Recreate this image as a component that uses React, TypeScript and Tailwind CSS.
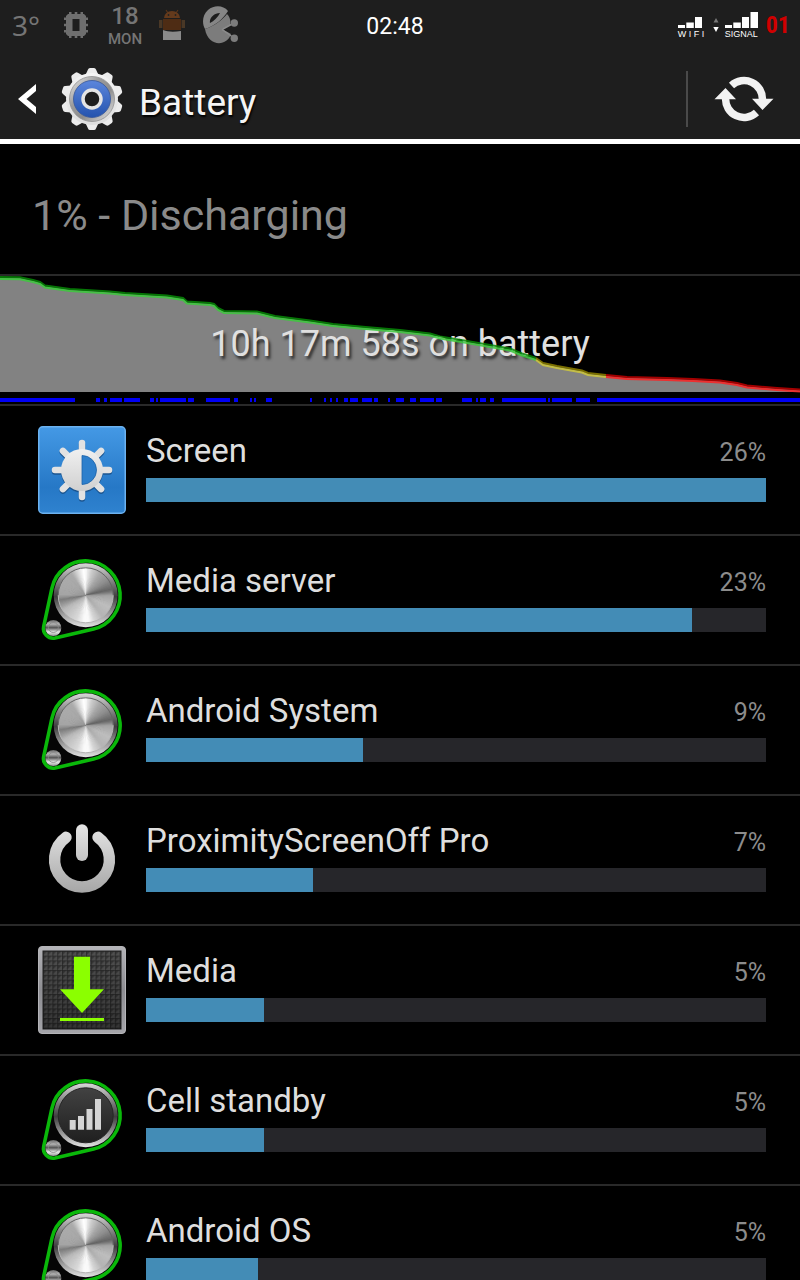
import type { ReactNode } from 'react'

type Usage = { name: string; percent: string; fill: number; icon: ReactNode }

// screen-on periods, as [start, end] along the time axis
const awake = [
  [0, 75], [96, 100], [104, 107], [110, 122], [124, 140], [150, 154], [156, 158], [160, 186],
  [188, 194], [206, 230], [234, 238], [250, 252], [254, 256], [266, 272], [310, 312], [324, 326],
  [330, 332], [336, 338], [344, 348], [350, 358], [362, 372], [374, 378], [388, 390], [396, 404],
  [410, 416], [420, 434], [436, 442], [462, 472], [476, 478], [480, 486], [490, 494], [502, 546],
  [548, 550], [552, 572], [576, 590], [597, 800],
]

const high =
  '0,2 20,2.3 33,5 40,7 45,10.5 70,14 110,16.5 125,18 167,20.5 183,23 187,26.5 210,28 214,29 218,33 224,36 257,36.5 275,41 310,45.5 333,49 360,51.5 400,55 430,58.5 440,61.5 467,66 490,70 510,73.5 522,78.5 536,83'
const medium = '536,83 543,88 557,91 582,95.5 588,98 606,100'
const low = '606,100 627,102 667,103 693,104 720,105.5 737,108 747,110.5 777,113 800,114.5'

const levels = [
  { points: high, dark: '#078a07', light: '#3ccb3c' },
  { points: medium, dark: '#8f8200', light: '#cfc83c' },
  { points: low, dark: '#c00000', light: '#ff2222' },
]

// brightness of the brushed metal at given angles, clockwise from the top
const shine = [
  [0, 240], [12, 205], [30, 170], [55, 140], [76, 100], [90, 165], [115, 190], [140, 180],
  [160, 215], [172, 250], [182, 250], [200, 215], [235, 185], [258, 125], [270, 165], [300, 170],
  [325, 170], [343, 225], [354, 255], [360, 240],
]

function shineAt(angle: number) {
  const i = shine.findIndex(([a]) => a > angle)
  const [a0, v0] = shine[i - 1]
  const [a1, v1] = shine[i]
  return Math.round(v0 + ((v1 - v0) * (angle - a0)) / (a1 - a0))
}

function BrushedDisc({ cx, cy, r }: { cx: number; cy: number; r: number }) {
  const at = (deg: number) => {
    const rad = (deg * Math.PI) / 180
    return `${cx + r * Math.sin(rad)} ${cy - r * Math.cos(rad)}`
  }
  return (
    <g>
      {Array.from({ length: 120 }, (_, i) => {
        const v = shineAt(i * 3)
        return (
          <path
            key={i}
            d={`M${cx} ${cy}L${at(i * 3)}A${r} ${r} 0 0 1 ${at(i * 3 + 5)}Z`}
            fill={`rgb(${v},${v},${v})`}
          />
        )
      })}
    </g>
  )
}

function BeltIcon({ id, signal = false }: { id: string; signal?: boolean }) {
  return (
    <svg viewBox="0 0 88 88" className="size-full" aria-hidden="true">
      <defs>
        <linearGradient id={`${id}-ring`} x1="0" y1="0" x2="0" y2="1">
          <stop offset="0" stopColor="#d8d8d8" />
          <stop offset="0.25" stopColor="#8c8c8c" />
          <stop offset="0.52" stopColor="#3e3e3e" />
          <stop offset="0.75" stopColor="#8e8e8e" />
          <stop offset="1" stopColor="#e4e4e4" />
        </linearGradient>
        <linearGradient id={`${id}-face`} x1="0" y1="0" x2="0" y2="1">
          <stop offset="0" stopColor="#424242" />
          <stop offset="1" stopColor="#1f1f1f" />
        </linearGradient>
        <linearGradient id={`${id}-knob`} x1="0" y1="0" x2="0" y2="1">
          <stop offset="0" stopColor="#666" />
          <stop offset="0.25" stopColor="#b5b5b5" />
          <stop offset="0.48" stopColor="#555" />
          <stop offset="0.75" stopColor="#e8e8e8" />
          <stop offset="1" stopColor="#999" />
        </linearGradient>
      </defs>
      <path
        d="M14 31.8A34.5 34.5 0 1 1 55.6 73L17.2 82A9.8 9.8 0 0 1 5.7 70.3Z"
        fill="#050505"
        stroke="#0ab80a"
        strokeWidth="3.6"
      />
      <circle cx="47.7" cy="39.3" r="32" fill={`url(#${id}-ring)`} />
      {signal ? (
        <>
          <circle cx="47.7" cy="39.3" r="27.5" fill={`url(#${id}-face)`} stroke="#252525" />
          <path d="M31.7 44h6v9.7h-6zM40 40h6v13.7h-6zM48.5 33h6v20.7h-6zM57 23h6v30.7h-6z" fill="#d4d4d4" />
        </>
      ) : (
        <>
          <BrushedDisc cx={47.7} cy={39.3} r={27.5} />
          <path d="M20.2 39.3a27.5 27.5 0 0 1 55 0" fill="none" stroke="#666" />
          <path d="M20.2 39.3a27.5 27.5 0 0 0 55 0" fill="none" stroke="#b5b5b5" />
        </>
      )}
      <circle cx="15.3" cy="72" r="8" fill={`url(#${id}-knob)`} />
      <circle cx="15.3" cy="71.5" r="5" fill="none" stroke="#8a8a8a" strokeWidth="0.8" />
    </svg>
  )
}

function ScreenIcon() {
  return (
    <svg viewBox="0 0 88 88" className="size-full" aria-hidden="true">
      <defs>
        <linearGradient id="screen-bg" x1="0" y1="0" x2="0" y2="1">
          <stop offset="0" stopColor="#4499e5" />
          <stop offset="0.7" stopColor="#2678c6" />
          <stop offset="1" stopColor="#2f82cf" />
        </linearGradient>
        <linearGradient id="screen-sun" x1="0" y1="0" x2="0" y2="1">
          <stop offset="0" stopColor="#f0f0f0" />
          <stop offset="1" stopColor="#d0d0d0" />
        </linearGradient>
      </defs>
      <rect x="0.75" y="0.75" width="86.5" height="86.5" rx="4" fill="url(#screen-bg)" stroke="#6cb2f0" strokeWidth="1.5" />
      {['#1b5590', '#e2e2e2'].map((color, layer) => (
        <g key={color} transform={layer === 0 ? 'translate(0 1.5)' : undefined}>
          {[0, 45, 90, 135, 180, 225, 270, 315].map((angle) => (
            <path
              key={angle}
              d="M44 26V17"
              stroke={color}
              strokeWidth="6.5"
              strokeLinecap="round"
              transform={`rotate(${angle} 44 44)`}
            />
          ))}
          <circle cx="44" cy="44" r="21" fill={layer === 0 ? color : 'url(#screen-sun)'} />
        </g>
      ))}
      <path d="M44 29.5a14.5 14.5 0 0 1 0 29z" fill="#2d7fcc" stroke="#1c62a8" strokeWidth="0.8" />
    </svg>
  )
}

function PowerIcon() {
  return (
    <svg viewBox="0 0 88 88" className="size-full" fill="none" strokeLinecap="round" aria-hidden="true">
      <defs>
        <linearGradient id="power" gradientUnits="userSpaceOnUse" x1="0" y1="8" x2="0" y2="77">
          <stop offset="0" stopColor="#e6e6e6" />
          <stop offset="1" stopColor="#a6a6a6" />
        </linearGradient>
      </defs>
      <path d="M28 21.3A27.4 27.4 0 1 0 60 21.3" stroke="url(#power)" strokeWidth="11.4" />
      <rect x="38" y="8.3" width="12" height="36.7" rx="6" fill="url(#power)" />
    </svg>
  )
}

function DownloadIcon() {
  return (
    <svg viewBox="0 0 88 88" className="size-full" aria-hidden="true">
      <defs>
        <linearGradient id="frame" x1="0" y1="0" x2="0" y2="1">
          <stop offset="0" stopColor="#b4b4b8" />
          <stop offset="0.5" stopColor="#8d8d92" />
          <stop offset="1" stopColor="#a5a5aa" />
        </linearGradient>
        <pattern id="studs" width="4.8" height="4.8" patternUnits="userSpaceOnUse">
          <rect width="4.8" height="4.8" fill="#353535" />
          <path d="M0 4.8L4.8 0V4.8Z" fill="#505050" />
          <path d="M0 0H4.8M0 0V4.8" stroke="#242424" />
        </pattern>
        <linearGradient id="shade" x1="0" y1="0" x2="0" y2="1">
          <stop offset="0" stopColor="#000" stopOpacity="0" />
          <stop offset="1" stopColor="#000" stopOpacity="0.35" />
        </linearGradient>
      </defs>
      <rect x="0.5" y="0.5" width="87" height="87" rx="3.5" fill="url(#frame)" stroke="#b4b4b8" />
      <rect x="5" y="5" width="78" height="78" fill="url(#studs)" stroke="#222" />
      <rect x="5" y="5" width="78" height="78" fill="url(#shade)" />
      <path d="M36 10.7h16v32.6h14L44 67 22 43.3h14zM22 72h44v3H22z" fill="#8bff00" />
    </svg>
  )
}

const usage: Usage[] = [
  { name: 'Screen', percent: '26%', fill: 100, icon: <ScreenIcon /> },
  { name: 'Media server', percent: '23%', fill: 88, icon: <BeltIcon id="media-server" /> },
  { name: 'Android System', percent: '9%', fill: 35, icon: <BeltIcon id="system" /> },
  { name: 'ProximityScreenOff Pro', percent: '7%', fill: 27, icon: <PowerIcon /> },
  { name: 'Media', percent: '5%', fill: 19, icon: <DownloadIcon /> },
  { name: 'Cell standby', percent: '5%', fill: 19, icon: <BeltIcon id="cell" signal /> },
  { name: 'Android OS', percent: '5%', fill: 18, icon: <BeltIcon id="os" /> },
]

function StatusBar() {
  return (
    <div className="grid h-[50px] grid-cols-[1fr_auto_1fr] items-center pr-[10px] pl-3">
      <div className="flex items-center text-[#757575]">
        <span className="w-[52px] font-['Noto_Sans'] text-[28px] leading-none">3°</span>
        <svg viewBox="0 0 24 26" className="mr-[19px] h-[26px] w-6" fill="#6e6e6e" aria-hidden="true">
          <path d="M5 0h2.5v3H5zM10.7 0h2.6v3h-2.6zM16.5 0H19v3h-2.5zM5 23h2.5v3H5zM10.7 23h2.6v3h-2.6zM16.5 23H19v3h-2.5zM0 5.5h3V8H0zM0 11.7h3v2.6H0zM0 18h3v2.5H0zM21 5.5h3V8h-3zM21 11.7h3v2.6h-3zM21 18h3v2.5h-3z" />
          <path fillRule="evenodd" d="M4 2h16l2 2v18l-2 2H4l-2-2V4zM8.5 7v12h7V7z" />
        </svg>
        <div className="mr-4 flex w-9 flex-col items-center font-medium">
          <span className="text-[24px] leading-[28px]">18</span>
          <span className="text-[15px] leading-[18px]">MON</span>
        </div>
        <svg viewBox="0 0 26 32" className="mr-[18px] h-8 w-[26px]" aria-hidden="true">
          <path d="M7 1l2 3M19 1l-2 3" stroke="#5a3418" strokeWidth="1.2" />
          <path d="M5 9a8 7 0 0 1 16 0z" fill="#643a1c" />
          <circle cx="9.5" cy="6" r="0.9" fill="#222" />
          <circle cx="16.5" cy="6" r="0.9" fill="#222" />
          <path d="M4 10h18v11H4z" fill="#4e2c14" />
          <path d="M0 11h3.4v8H0zM22.6 11H26v8h-3.4z" fill="#4a3826" />
          <path d="M4 21c5 2 11 2 18 1v9H4z" fill="#8a8a8a" />
        </svg>
        <svg viewBox="0 0 36 39" className="h-[39px] w-9" aria-hidden="true">
          <path
            d="M25 5C20-1 11-1 5 4-1 9-1 18 2 23 12 20 20 13 25 5zM17 7c-2 4-6 8-10 10-1-5 4-10 10-10z"
            fill="#868686"
            fillRule="evenodd"
          />
          <path d="M2 23C12 20 20 13 24 8c3 3 4 7 3 11l-8 4 9 5C24 41 5 41 2 23z" fill="#7c7c7c" />
          <path d="M19 23.500l12-6.500M19 23.500l12 8.500" stroke="#8c8c8c" strokeWidth="1.500" />
          <circle cx="31.300" cy="17" r="3.700" fill="#7c7c7c" />
          <circle cx="31.300" cy="32.300" r="3.700" fill="#7c7c7c" />
        </svg>
      </div>
      <time className="pt-0.5 pr-3 text-[23px] leading-none text-white">02:48</time>
      <div className="flex items-center justify-end font-['Liberation_Sans'] text-[9px] leading-[8px] text-white">
        <div className="flex w-[33px] flex-col gap-0.5">
          <svg viewBox="0 0 33 16" className="h-4 w-[33px]" fill="#fff" aria-hidden="true">
            <path d="M0 13h7v3H0zM8.300 10.500h7.500V16H8.300zM17 5h7v11h-7z" />
          </svg>
          <span className="whitespace-nowrap">W I F I</span>
        </div>
        <svg viewBox="0 0 6 14" className="mr-[6px] ml-0.5 h-3.5 w-1.5" aria-hidden="true">
          <path d="M3 0l2.500 4.500h-5z" fill="#777" />
          <path d="M3 14L.3 9h5.400z" fill="#fff" />
        </svg>
        <div className="flex w-[33px] flex-col gap-0.5">
          <svg viewBox="0 0 33 16" className="h-4 w-[33px]" fill="#fff" aria-hidden="true">
            <path d="M0 13h7v3H0zM8.300 10.500h7.500V16H8.300zM17 5h7v11h-7zM25.500 0H33v16h-7.500z" />
          </svg>
          <span>SIGNAL</span>
        </div>
        <span className="ml-2 font-['Roboto_Condensed','Roboto'] text-[24px] leading-none font-bold text-[#d00000]">
          01
        </span>
      </div>
    </div>
  )
}

function SettingsGear() {
  return (
    <svg viewBox="-31 -31 62 62" className="size-[62px]" aria-hidden="true">
      <defs>
        <linearGradient id="gear" x1="0" y1="0" x2="0" y2="1">
          <stop offset="0" stopColor="#f4f4f4" />
          <stop offset="1" stopColor="#dedede" />
        </linearGradient>
        <linearGradient id="gear-ring" x1="0" y1="0" x2="1" y2="1">
          <stop offset="0" stopColor="#f0f0f0" />
          <stop offset="0.35" stopColor="#9c9c9c" />
          <stop offset="0.6" stopColor="#8c8c8c" />
          <stop offset="1" stopColor="#f0f0f0" />
        </linearGradient>
        <linearGradient id="gear-blue" x1="0" y1="0" x2="0" y2="1">
          <stop offset="0" stopColor="#5b86dc" />
          <stop offset="1" stopColor="#2453ae" />
        </linearGradient>
      </defs>
      {Array.from({ length: 10 }, (_, i) => (
        <path
          key={i}
          d="M-6.5-24L-4-29.5Q-3.5-31-2-31H2Q3.5-31 4-29.5L6.5-24Z"
          fill="#ececec"
          transform={`rotate(${i * 36})`}
        />
      ))}
      <circle r="26" fill="url(#gear)" />
      <circle r="22.5" fill="url(#gear-ring)" stroke="#8f8f8f" strokeWidth="0.8" />
      <circle r="18.5" fill="url(#gear-blue)" stroke="#36579b" strokeWidth="0.8" />
      <circle r="9" fill="#1e1e1e" stroke="#e4e4e4" strokeWidth="3.5" />
    </svg>
  )
}

function ActionBar() {
  return (
    <header className="flex h-[94px] items-center border-b-5 border-white pt-2">
      <button className="flex h-full items-center gap-6 pl-[18px] text-left">
        <svg viewBox="0 0 19 30" className="h-[30px] w-[19px]" aria-hidden="true">
          <path d="M18 0v7L8.5 15 18 23v7L0 15z" fill="#fff" />
        </svg>
        <SettingsGear />
        <h1 className="-ml-2 pt-2 text-[37px] leading-none text-[#f5f5f5] text-shadow-[1px_2px_2px_#000]">
          Battery
        </h1>
      </button>
      <button aria-label="Refresh" className="ml-auto flex h-14 items-center border-l-2 border-[#4a4a4a] px-[26px]">
        <svg viewBox="-30 -23 60 46" className="h-[46px] w-[60px]" aria-hidden="true">
          <path
            d="M-12.5-13.5A18.4 18.4 0 0 1 18.4 1M12.5 13.5A18.4 18.4 0 0 1-18.4-1"
            fill="none"
            stroke="#f2f2f2"
            strokeWidth="7.5"
          />
          <path d="M8-.3H29.5L18.5 11zM-8 .3H-29.5L-18.5-11z" fill="#f2f2f2" />
        </svg>
      </button>
    </header>
  )
}

function HistoryChart() {
  return (
    <button className="relative flex h-[130px] w-full items-center justify-center border-b-2 border-[#292929]">
      <svg viewBox="0 0 800 128" preserveAspectRatio="none" className="absolute inset-0 size-full" aria-hidden="true">
        <polygon points={`0,116 ${high} ${medium} ${low} 800,116`} fill="#828282" />
        {awake.map(([start, end]) => (
          <rect key={start} x={start} y="122" width={end - start} height="4" fill="#0000f5" />
        ))}
      </svg>
      <span className="relative pt-2 text-[36px] leading-none text-[#e0e0e0] text-shadow-[2px_3px_3px_#000000b0]">
        10h 17m 58s on battery
      </span>
      <svg
        viewBox="0 0 800 128"
        preserveAspectRatio="none"
        className="absolute inset-0 size-full"
        fill="none"
        strokeWidth="2"
        aria-hidden="true"
      >
        {levels.map((level) => (
          <g key={level.dark} opacity="0.85">
            <polyline points={level.points} stroke={level.dark} transform="translate(0 -1)" />
            <polyline points={level.points} stroke={level.light} transform="translate(0 1)" />
          </g>
        ))}
      </svg>
    </button>
  )
}

function UsageRow({ name, percent, fill, icon }: Usage) {
  return (
    <li className="border-b-2 border-[#292929]">
      <button className="flex h-32 w-full items-center gap-5 pr-[34px] pl-[38px] text-left">
        <span className="size-[88px] shrink-0">{icon}</span>
        <span className="flex min-w-0 flex-1 flex-col pb-2">
          <span className="flex h-12 items-center justify-between pb-2">
            <span className="text-[33px] leading-none text-[#dedede]">{name}</span>
            <span className="pt-1 text-[25px] leading-none text-[#8c8c8c]">{percent}</span>
          </span>
          <span className="block h-6 bg-[#26262a]">
            <span className="block h-full bg-[#438cb6]" style={{ width: `${fill}%` }} />
          </span>
        </span>
      </button>
    </li>
  )
}

export default function App() {
  return (
    <div className="h-screen overflow-hidden bg-black font-['Roboto',sans-serif]">
      <div className="bg-[#1e1e1e]">
        <StatusBar />
        <ActionBar />
      </div>
      <main>
        <h2 className="flex h-[132px] items-center border-b-2 border-[#292929] px-8 pt-3 text-[43px] leading-none text-[#8a8a8a]">
          1% - Discharging
        </h2>
        <HistoryChart />
        <ul>
          {usage.map((item) => (
            <UsageRow key={item.name} {...item} />
          ))}
        </ul>
      </main>
    </div>
  )
}
